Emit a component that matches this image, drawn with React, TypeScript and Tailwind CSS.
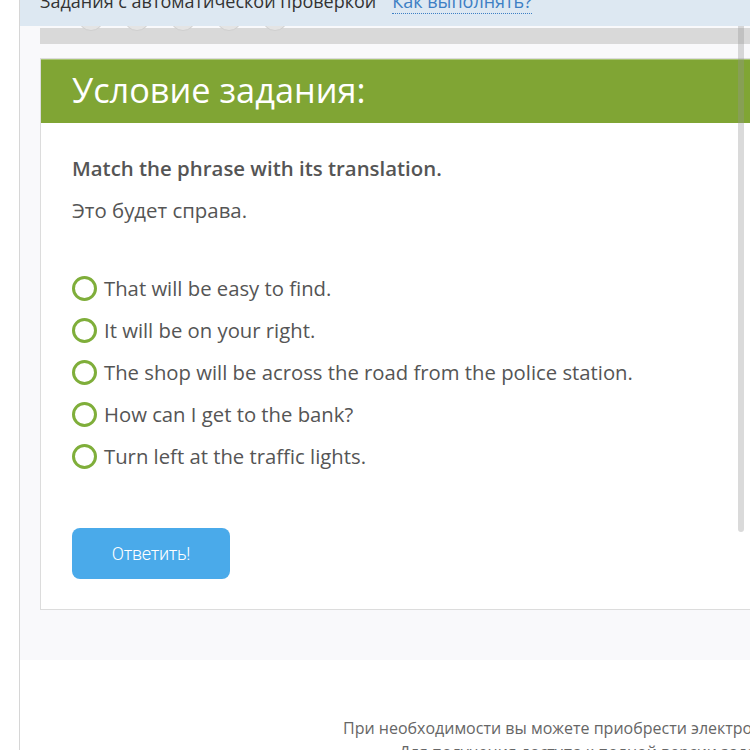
const options = [
  'That will be easy to find.',
  'It will be on your right.',
  'The shop will be across the road from the police station.',
  'How can I get to the bank?',
  'Turn left at the traffic lights.',
];

export default function App() {
  return (
    <div className="relative w-[750px] h-[750px] overflow-hidden bg-white flex font-['Open_Sans',sans-serif]">
      {/* left gutter */}
      <div className="w-[20px] shrink-0 bg-white border-r border-[#d6d6d6] shadow-[1px_0_2px_rgba(0,0,0,0.08)]" />

      <div className="w-[1100px] shrink-0 flex flex-col">
        {/* top info bar */}
        <div className="relative z-10 shrink-0 h-[26px] bg-[#dde8f2] overflow-hidden">
          <div className="-mt-[13px] pl-[20px] flex items-baseline gap-[16px] text-[18px] leading-[28px]">
            <span className="text-[#333]">Задания с автоматической проверкой</span>
            <span className="text-[#3d7fc4] border-b border-dotted border-[#3d7fc4] leading-[24px]">Как выполнять?</span>
          </div>
        </div>

        <div className="shrink-0 bg-[#f9f9fb] px-[20px] pt-[2px]">
          {/* progress strip */}
          <div className="relative h-[16px] bg-[#d9d9d9]">
            <div className="absolute left-[38px] -top-[23px] flex gap-[20px]">
              {[0, 1, 2, 3, 4].map((i) => (
                <div key={i} className="w-[26px] h-[26px] rounded-full bg-[#e4e4e4] border border-[#cfcfcf]" />
              ))}
            </div>
          </div>

          {/* task card */}
          <div className="mt-[14px] border border-[#dcdcdc] bg-white">
            <div className="h-[64px] bg-[#80a534] border-t border-[#a8c572] flex items-center pl-[31px]">
              <h2 className="text-white text-[34.3px] leading-none pb-[2px]">Условие задания:</h2>
            </div>
            <div className="pl-[31px] pt-[32px] pb-[30px]">
              <p className="text-[#555] text-[20.4px] font-semibold leading-[26px]">Match the phrase with its translation.</p>
              <p className="text-[#555] text-[20.4px] leading-[26px] mt-[16px]">Это будет справа.</p>
              <div className="mt-[52px] flex flex-col gap-[16px]">
                {options.map((o) => (
                  <label key={o} className="flex items-center gap-[7px] h-[26px]">
                    <span className="w-[25px] h-[25px] rounded-full border-[3px] border-[#7fae3a] bg-white shrink-0" />
                    <span className="text-[#555] text-[20.3px] leading-[26px]">{o}</span>
                  </label>
                ))}
              </div>
              <button className="mt-[59px] w-[158px] h-[51px] rounded-[8px] bg-[#4aaaea] text-white text-[18px] font-light font-['Roboto',sans-serif] tracking-[-0.3px]">
                Ответить!
              </button>
            </div>
          </div>
          <div className="h-[50px]" />
        </div>

        {/* footer */}
        <div className="bg-white flex-1 pt-[56px] pl-[323px]">
          <p className="text-[#666] text-[16px] leading-[24px] whitespace-nowrap">
            При необходимости вы можете приобрести электронное приложение к учебнику.
          </p>
          <p className="text-[#666] text-[16px] leading-[24px] whitespace-nowrap pl-[56px]">
            Для получения доступа к полной версии заданий <span className="text-[#3d7fc4]">перейдите</span>
          </p>
        </div>
      </div>

      {/* scrollbar thumb */}
      <div className="absolute left-[738px] top-0 w-[6px] h-[532px] rounded-b-[3px] bg-[rgba(150,150,150,0.35)]" />
    </div>
  );
}
